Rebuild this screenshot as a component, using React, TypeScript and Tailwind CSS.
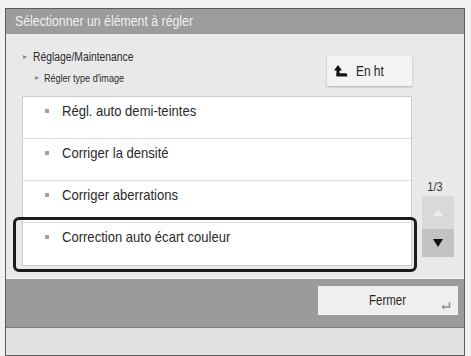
const font = { fontFamily: '"Liberation Sans", Arial, sans-serif' }

const rows = ['Régl. auto demi-teintes', 'Corriger la densité', 'Corriger aberrations', 'Correction auto écart couleur']

function UpHookIcon() {
    return (
        <svg width="14" height="12" viewBox="0 0 14 12" className="mr-[8px]">
            <polygon points="0,5.5 4,0 8,5.5" fill="#111" />
            <rect x="2.5" y="4" width="3" height="7" fill="#111" />
            <path d="M2.5 8.3 H12 Q13.2 8.3 13.2 9.8 V11.5 H2.5 Z" fill="#111" />
        </svg>
    )
}

function ReturnIcon() {
    return (
        <svg width="10" height="8" viewBox="0 0 10 8">
            <path d="M8.5 0.5 V5 H2.5" fill="none" stroke="#8a8a8a" strokeWidth="1.6" />
            <polygon points="0.5,5 3.2,2.6 3.2,7.4" fill="#8a8a8a" />
        </svg>
    )
}

export default function App() {
    return (
        <div className="w-[471px] h-[356px] bg-[#f1f1f1] overflow-hidden pt-[8px] pl-[5px]" style={font}>
            <div className="w-[460px] h-[348px] border border-[#5c5c5c] flex flex-col">
                {/* title */}
                <div className="h-[25px] bg-[#9c9c9c] flex items-center pl-[9px] text-[14px] text-[#f0f0f0] shrink-0">
                    <span className="inline-block origin-left scale-x-[0.88] whitespace-nowrap">Sélectionner un élément à régler</span>
                </div>

                {/* body */}
                <div className="h-[244px] bg-[#e9e9e9] flex shrink-0">
                    <div className="pl-[16px] pt-[16px] w-[406px]">
                        <div className="flex justify-between h-[36px]">
                            <div className="text-[#2b2b2b]">
                                <div className="flex items-center h-[14px] text-[12px] pl-[1px]">
                                    <span className="text-[8px] text-[#8a8a8a] mr-[6px]">▸</span>
                                    <span className="inline-block origin-left scale-x-[0.86] whitespace-nowrap">Réglage/Maintenance</span>
                                </div>
                                <div className="flex items-center h-[14px] mt-[7px] text-[11px] pl-[13px]">
                                    <span className="text-[8px] text-[#8a8a8a] mr-[5px]">▸</span>
                                    <span className="inline-block origin-left scale-x-[0.82] whitespace-nowrap">Régler type d'image</span>
                                </div>
                            </div>
                            <div className="mt-[6px] h-[30px] w-[85px] bg-[#f3f3f3] shadow-[0_1px_2px_rgba(0,0,0,0.25)] flex items-center pl-[7px] text-[14px] text-[#222]">
                                <UpHookIcon />
                                <span className="inline-block origin-left scale-x-[0.85] whitespace-nowrap">En ht</span>
                            </div>
                        </div>

                        <div className="mt-[10px] w-[390px] bg-white border border-[#cdcdcd]">
                            {rows.map((r, i) => (
                                <div
                                    key={r}
                                    className={`relative h-[42px] flex items-start pt-[3px] pl-[22px] text-[15px] text-[#2a2a2a] ${i < rows.length - 1 ? 'border-b border-[#dcdcdc]' : ''}`}
                                >
                                    <span className="w-[4px] h-[4px] bg-[#a0a0a0] mt-[9px] mr-[13px] shrink-0" />
                                    <span className="inline-block origin-left scale-x-[0.87] whitespace-nowrap">{r}</span>
                                    {i === rows.length - 1 && (
                                        <div className="absolute -left-[10px] -right-[6px] -top-[6px] -bottom-[7px] border-[3px] border-[#1c1c1c] rounded-[6px] pointer-events-none" />
                                    )}
                                </div>
                            ))}
                        </div>
                    </div>

                    {/* scroll column */}
                    <div className="flex-1 flex flex-col items-center pt-[146px]">
                        <div className="text-[13px] text-[#333] leading-[14px] pr-[5px]">
                            <span className="inline-block scale-x-[0.85]">1/3</span>
                        </div>
                        <div className="mt-[2px] w-[32px] h-[33px] bg-[#d9d9d9] flex items-center justify-center">
                            <svg width="10" height="7" viewBox="0 0 10 7">
                                <polygon points="5,0 10,7 0,7" fill="#eeeeee" />
                            </svg>
                        </div>
                        <div className="w-[32px] h-[28px] bg-[#c3c3c3] flex items-center justify-center">
                            <svg width="10" height="8" viewBox="0 0 10 8">
                                <polygon points="0,0 10,0 5,8" fill="#111" />
                            </svg>
                        </div>
                    </div>
                </div>

                {/* bottom bar */}
                <div className="h-[49px] bg-[#9b9b9b] border-t border-[#f2f2f2] flex justify-end items-start pt-[7px] pr-[6px] shrink-0">
                    <div className="w-[140px] h-[29px] bg-[#efefef] relative flex items-center justify-center text-[14px] text-[#2a2a2a]">
                        <span className="inline-block scale-x-[0.82] whitespace-nowrap">Fermer</span>
                        <div className="absolute right-[7px] bottom-[5px]">
                            <ReturnIcon />
                        </div>
                    </div>
                </div>

                {/* footer */}
                <div className="flex-1 bg-[#e2e2e2] border-t border-[#7c7c7c]" />
            </div>
        </div>
    )
}
